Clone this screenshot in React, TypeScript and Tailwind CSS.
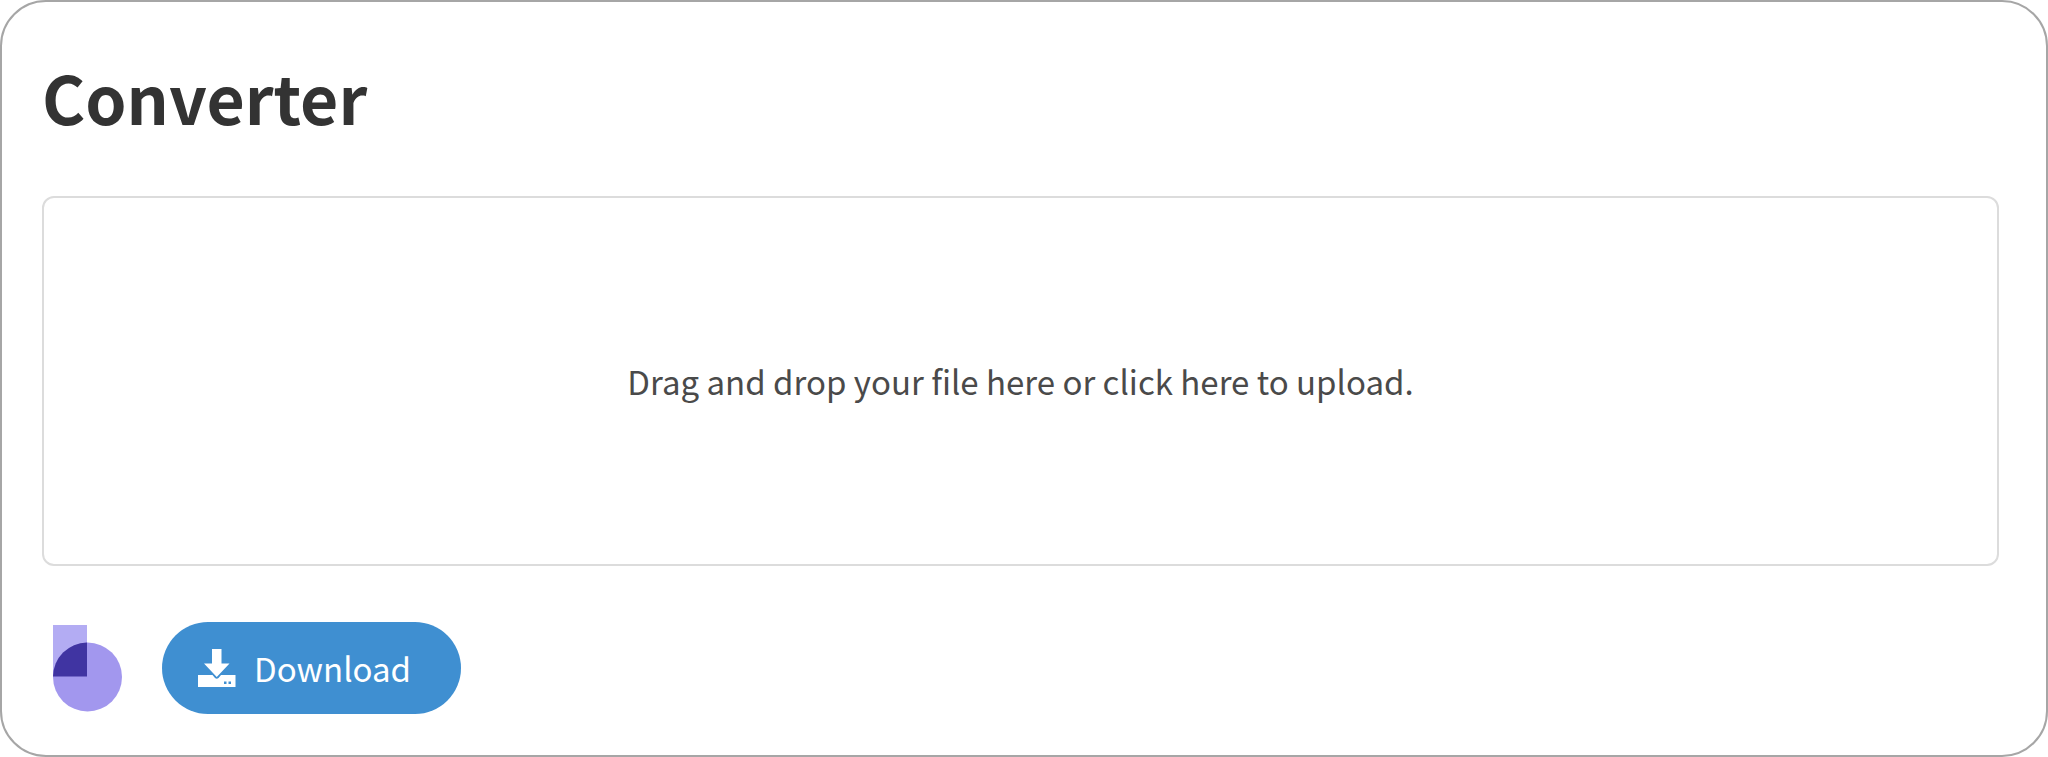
import { useState } from "react";
import type { ChangeEvent, DragEvent } from "react";

function Logo() {
  return (
    <svg viewBox="0 0 70 88" className="h-[88px] w-[70px]" aria-hidden="true">
      <rect x="1" y="1" width="34" height="52" fill="#b3acf3" />
      <circle cx="35.5" cy="53" r="34.5" fill="#a297ee" />
      <path d="M35 18.5A34.5 34.5 0 0 0 1 52.5H35Z" fill="#4034a2" />
    </svg>
  );
}

function DownloadIcon() {
  return (
    <svg
      viewBox="0 0 38 38"
      className="size-[38px]"
      fill="currentColor"
      aria-hidden="true"
    >
      <path d="M14 0h9.500v14.500h8L18.750 28 6 14.500h8z" />
      <path
        fillRule="evenodd"
        d="M0 26h14.500l2.500 3q1.750 1.500 3.500 0l2.500-3H37.500v12H0zM26 32.500v2.500h2.500V32.500zM30.500 32.500v2.500h2.500V32.500z"
      />
    </svg>
  );
}

export default function App() {
  const [fileName, setFileName] = useState("");

  const handleChange = (e: ChangeEvent<HTMLInputElement>) => {
    setFileName(e.target.files?.[0]?.name ?? "");
  };

  const handleDrop = (e: DragEvent<HTMLLabelElement>) => {
    e.preventDefault();
    setFileName(e.dataTransfer.files?.[0]?.name ?? "");
  };

  return (
    <main className="rounded-[46px] border-2 border-[#a6a6a6] bg-white pt-[46px] pr-[47px] pb-[41px] pl-10 font-['Noto_Sans_CJK_SC',sans-serif] text-[#333333]">
      <h1 className="text-[66px] leading-[96px] font-bold">Converter</h1>

      <label
        htmlFor="file"
        onDragOver={(e) => e.preventDefault()}
        onDrop={handleDrop}
        className="mt-[52px] flex h-[370px] cursor-pointer items-center justify-center rounded-xl border-2 border-[#dcdcdc] text-[33px] leading-[52px] text-[#4a4a4a]"
      >
        {fileName || "Drag and drop your file here or click here to upload."}
        <input
          id="file"
          type="file"
          className="sr-only"
          onChange={handleChange}
        />
      </label>

      <div className="mt-14 flex items-center gap-10 pl-[10px]">
        <Logo />
        <button
          type="button"
          className="flex h-[92px] cursor-pointer items-center gap-[18px] rounded-full bg-[#3f8fd1] pr-[50px] pl-9 text-[33px] leading-[52px] text-white"
        >
          <DownloadIcon />
          Download
        </button>
      </div>
    </main>
  );
}
